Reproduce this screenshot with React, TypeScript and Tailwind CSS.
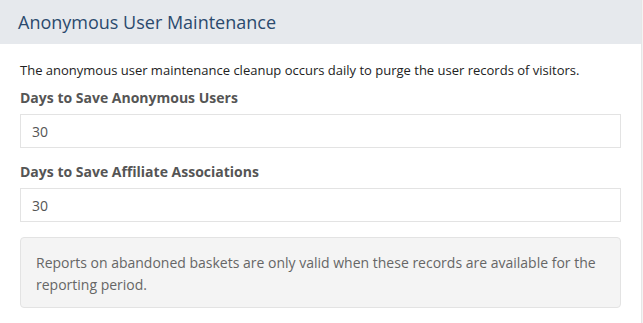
import React from 'react';

function Field({ label, value }: { label: string; value: string }) {
  return (
    <div className="flex flex-col">
      <label className="text-[14px] font-bold text-[#555] leading-[20px] mb-[6px]">{label}</label>
      <input
        readOnly
        value={value}
        className="h-[34px] w-full border border-[#e3e3e3] bg-white px-[11px] text-[14px] text-[#555] outline-none"
      />
    </div>
  );
}

export default function App() {
  return (
    <div
      className="min-h-[323px] w-[643px] bg-[#f3f3f3]"
      style={{ fontFamily: '"Open Sans", "Noto Sans", sans-serif' }}
    >
      <div className="w-[642px] border-r border-[#e6e6e6] bg-white">
        <div className="flex h-[44px] items-center bg-[#e6e9ed] px-[18px]">
          <h2 className="text-[18px] font-normal text-[#2b4a6e]">Anonymous User Maintenance</h2>
        </div>
        <div className="flex flex-col px-[20px] pt-[16px] pb-[24px]">
          <p className="text-[13px] leading-[20px] text-[#222] mb-[8px]">
            The anonymous user maintenance cleanup occurs daily to purge the user records of visitors.
          </p>
          <Field label="Days to Save Anonymous Users" value="30" />
          <div className="h-[14px]" />
          <Field label="Days to Save Affiliate Associations" value="30" />
          <div className="mt-[15px] w-[601px] rounded-[4px] border border-[#e3e3e3] bg-[#f4f4f4] px-[15px] pt-[14px] pb-[11px] text-[14px] leading-[22px] text-[#666]">
            Reports on abandoned baskets are only valid when these records are available for the reporting period.
          </div>
        </div>
      </div>
    </div>
  );
}
